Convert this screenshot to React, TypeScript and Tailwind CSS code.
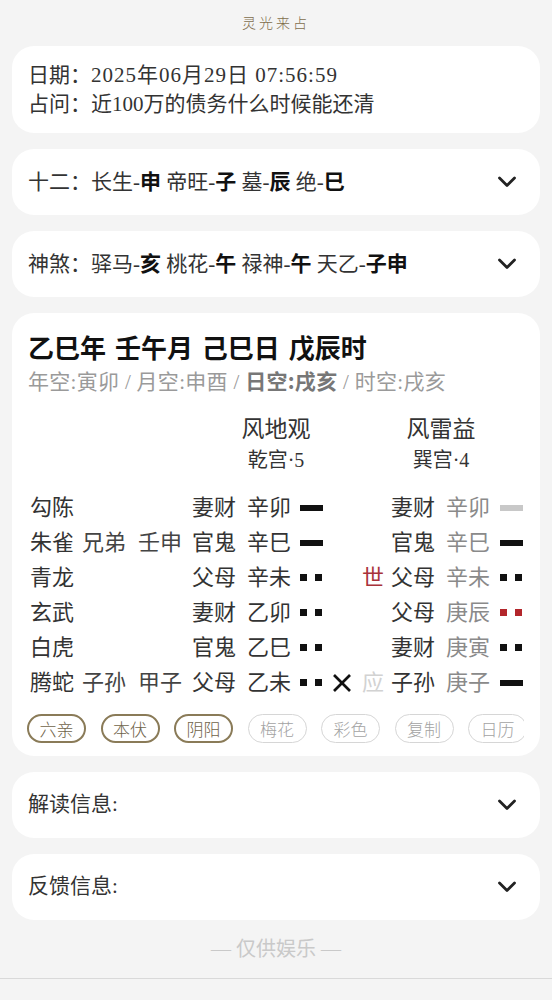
import React from 'react'

const serif = "font-['Liberation_Serif','Noto_Sans_CJK_SC',serif]"

type Line = 'yang' | 'yin' | 'yang-light' | 'yin-red'

interface Row {
  god: string
  fu?: [string, string]
  qin: string
  gz: string
  line: Line
  dong?: boolean
  sy?: '世' | '应'
  bq: string
  bgz: string
  bline: Line
}

const rows: Row[] = [
  { god: '勾陈', qin: '妻财', gz: '辛卯', line: 'yang', bq: '妻财', bgz: '辛卯', bline: 'yang-light' },
  { god: '朱雀', fu: ['兄弟', '壬申'], qin: '官鬼', gz: '辛巳', line: 'yang', bq: '官鬼', bgz: '辛巳', bline: 'yang' },
  { god: '青龙', qin: '父母', gz: '辛未', line: 'yin', sy: '世', bq: '父母', bgz: '辛未', bline: 'yin' },
  { god: '玄武', qin: '妻财', gz: '乙卯', line: 'yin', bq: '父母', bgz: '庚辰', bline: 'yin-red' },
  { god: '白虎', qin: '官鬼', gz: '乙巳', line: 'yin', bq: '妻财', bgz: '庚寅', bline: 'yin' },
  { god: '腾蛇', fu: ['子孙', '甲子'], qin: '父母', gz: '乙未', line: 'yin', dong: true, sy: '应', bq: '子孙', bgz: '庚子', bline: 'yang' },
]

const pills = [
  { label: '六亲', on: true },
  { label: '本伏', on: true },
  { label: '阴阳', on: true },
  { label: '梅花', on: false },
  { label: '彩色', on: false },
  { label: '复制', on: false },
  { label: '日历', on: false },
]

function Chevron() {
  return (
    <svg width="20" height="12" viewBox="0 0 20 12" fill="none" className="shrink-0">
      <polyline points="2.5,2 10,9.5 17.5,2" stroke="#222" strokeWidth="2.8" strokeLinecap="round" strokeLinejoin="round" />
    </svg>
  )
}

function Yao({ kind }: { kind: Line }) {
  if (kind === 'yang' || kind === 'yang-light') {
    return (
      <div className={`h-[6px] w-[23px] ${kind === 'yang' ? 'bg-[#111]' : 'bg-[#c8c8c8]'}`} />
    )
  }
  const c = kind === 'yin-red' ? 'bg-[#b3262b]' : 'bg-[#111]'
  return (
    <div className="flex w-[23px] gap-[8px]">
      <div className={`h-[7px] w-[7px] ${c}`} />
      <div className={`h-[7px] w-[7px] ${c}`} />
    </div>
  )
}

function Cross() {
  return (
    <svg width="22" height="22" viewBox="0 0 22 22" fill="none">
      <line x1="3" y1="3" x2="19" y2="19" stroke="#111" strokeWidth="2.6" />
      <line x1="19" y1="3" x2="3" y2="19" stroke="#111" strokeWidth="2.6" />
    </svg>
  )
}

function FoldCard({ children }: { children: React.ReactNode }) {
  return (
    <div className="flex h-[66px] items-center justify-between rounded-[22px] bg-white pl-4 pr-[23px]">
      <div className={`${serif} text-[21px] text-[#333]`}>{children}</div>
      <Chevron />
    </div>
  )
}

const B = ({ children }: { children: React.ReactNode }) => (
  <span className="font-['Noto_Sans_CJK_SC',sans-serif] font-bold text-[#111]">{children}</span>
)

export default function App() {
  return (
    <div className="min-h-[1000px] bg-[#f4f4f4]">
      <div className="flex h-[46px] items-center justify-center pb-[2px]">
        <span className="font-['Noto_Sans_CJK_SC',sans-serif] text-[14px] font-light tracking-[3px] text-[#7f6d4c]">
          灵光来占
        </span>
      </div>

      <div className="flex flex-col gap-4 px-3">
        <div className={`${serif} rounded-[22px] bg-white px-4 pb-[14px] pt-[15px] text-[21px] leading-[29px] text-[#333]`}>
          <div>
            日期：<span className="tracking-[1px]">2025年06月29日 07:56:59</span>
          </div>
          <div>占问：近100万的债务什么时候能还清</div>
        </div>

        <FoldCard>
          十二：长生-<B>申</B> 帝旺-<B>子</B> 墓-<B>辰</B> 绝-<B>巳</B>
        </FoldCard>

        <FoldCard>
          神煞：驿马-<B>亥</B> 桃花-<B>午</B> 禄神-<B>午</B> 天乙-<B>子申</B>
        </FoldCard>

        <div className="rounded-[22px] bg-white px-4 pb-[13px] pt-[17px]">
          <div className="font-['Noto_Sans_CJK_SC',sans-serif] text-[26px] font-bold leading-[34px] text-[#111] [word-spacing:3px]">
            乙巳年 壬午月 己巳日 戊辰时
          </div>
          <div className={`${serif} mt-[1px] text-[21px] leading-[30px] tracking-[0.3px] text-[#9a9a9a]`}>
            年空:寅卯 / 月空:申酉 / <span className="font-['Noto_Sans_CJK_SC',sans-serif] font-bold text-[#777]">日空:戌亥</span> / 时空:戌亥
          </div>

          <div className={`${serif} mt-[17px] flex text-[#333]`}>
            <div className="ml-[193px] flex w-[110px] flex-col items-center">
              <div className="text-[23px] leading-[32px]">风地观</div>
              <div className="text-[20px] leading-[28px]">乾宫·5</div>
            </div>
            <div className="ml-[55px] flex w-[110px] flex-col items-center">
              <div className="text-[23px] leading-[32px]">风雷益</div>
              <div className="text-[20px] leading-[28px]">巽宫·4</div>
            </div>
          </div>

          <div className={`${serif} mt-[16px] pl-[2px] text-[22px] text-[#333]`}>
            {rows.map((r, i) => (
              <div
                key={i}
                className="grid h-[35px] grid-cols-[52px_56px_54px_55px_53px_24px_7px_31px_29px_55px_54px_24px] items-center"
              >
                <span>{r.god}</span>
                <span className="text-[#444]">{r.fu ? r.fu[0] : ''}</span>
                <span className="text-[#444]">{r.fu ? r.fu[1] : ''}</span>
                <span>{r.qin}</span>
                <span>{r.gz}</span>
                <Yao kind={r.line} />
                <span />
                <span className="flex items-center">{r.dong ? <Cross /> : null}</span>
                <span className={r.sy === '世' ? 'text-[#a8323a]' : 'text-[#d2d2d2]'}>{r.sy ?? ''}</span>
                <span>{r.bq}</span>
                <span className="text-[#8a8a8a]">{r.bgz}</span>
                <Yao kind={r.bline} />
              </div>
            ))}
          </div>

          <div className="-ml-px mt-[14px] flex gap-[14.5px] overflow-hidden">
            {pills.map((p) => (
              <div
                key={p.label}
                className={`flex h-[29px] w-[59px] shrink-0 items-center justify-center rounded-full font-['Noto_Sans_CJK_SC',sans-serif] text-[17px] font-light ${
                  p.on ? 'border-2 border-[#8a7b58] text-[#6f6349]' : 'border-[1.5px] border-[#d6d6d6] text-[#a3a3a3]'
                }`}
              >
                {p.label}
              </div>
            ))}
          </div>
        </div>

        <FoldCard>解读信息:</FoldCard>
        <FoldCard>反馈信息:</FoldCard>
      </div>

      <div className={`${serif} flex h-[58px] items-center justify-center text-[20px] text-[#c9c9c9]`}>
        — 仅供娱乐 —
      </div>
      <div className="h-px bg-[#d9d9d9]" />
    </div>
  )
}
